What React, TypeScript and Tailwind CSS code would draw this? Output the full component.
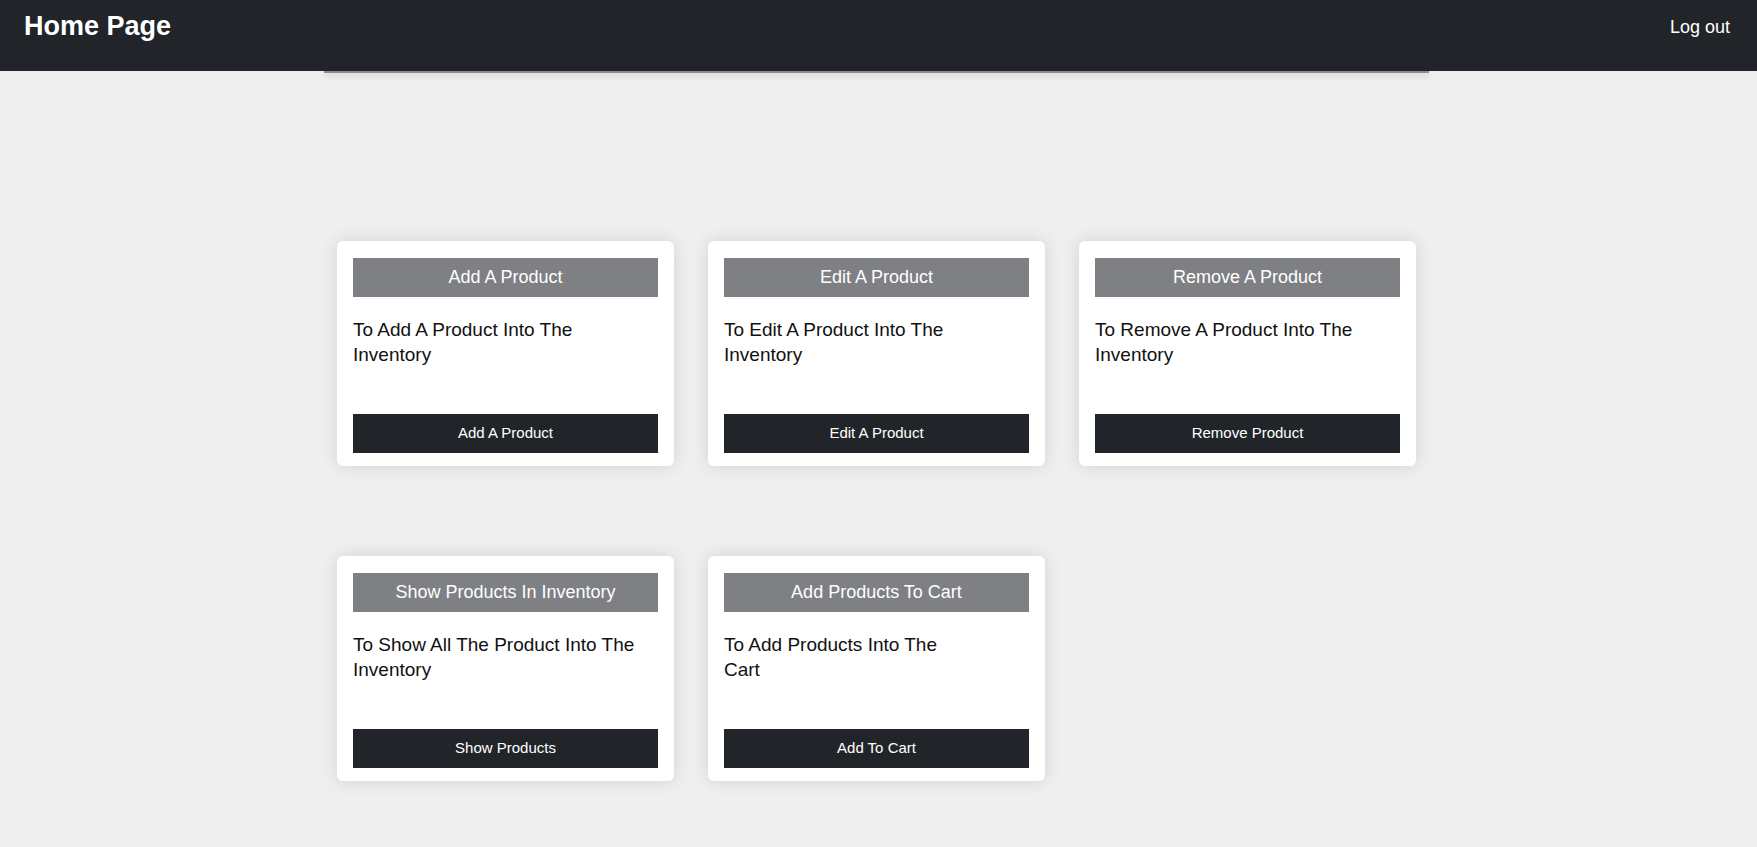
import React from "react";

const cards = [
  {
    id: 1,
    title: "Add A Product",
    lines: ["To Add A Product Into The", "Inventory"],
    button: "Add A Product",
  },
  {
    id: 2,
    title: "Edit A Product",
    lines: ["To Edit A Product Into The", "Inventory"],
    button: "Edit A Product",
  },
  {
    id: 3,
    title: "Remove A Product",
    lines: ["To Remove A Product Into The", "Inventory"],
    button: "Remove Product",
  },
  {
    id: 4,
    title: "Show Products In Inventory",
    lines: ["To Show All The Product Into The", "Inventory"],
    button: "Show Products",
  },
  {
    id: 5,
    title: "Add Products To Cart",
    lines: ["To Add Products Into The", "Cart"],
    button: "Add To Cart",
  },
];

const App: React.FC = () => {
  return (
    <div
      className="min-h-[847px] bg-[#efefef]"
      style={{ fontFamily: '"Liberation Sans", Arial, sans-serif' }}
    >
      {/* Navbar */}
      <nav className="h-[71px] bg-[#212529] text-white">
        <div className="h-[52px] flex items-center justify-between pl-6 pr-[27px]">
          <h1 className="text-[27px] font-bold leading-normal">Home Page</h1>
          <a href="#" className="text-[18px] leading-normal mt-[2px]">
            Log out
          </a>
        </div>
      </nav>

      {/* Container */}
      <div className="w-[1109px] mx-auto">
        <div className="w-[1105px]">
          <div className="h-[2px] bg-[#8c8c8c] shadow-[0_2px_6px_rgba(0,0,0,0.22)]"></div>

          <div className="grid grid-cols-3 gap-x-[34px] gap-y-[90px] px-[13px] pt-[168px]">
            {cards.map((card) => (
              <div
                key={card.id}
                className="bg-white rounded-[6px] shadow-[0_0_18px_rgba(0,0,0,0.12)] h-[225px] pt-[17px] px-4 pb-[13px] flex flex-col"
              >
                <div className="h-[39px] bg-[#7e8084] text-white text-[18px] flex items-center justify-center">
                  {card.title}
                </div>
                <p className="mt-[20px] text-[19px] leading-[25px] text-[#111]">
                  {card.lines[0]}
                  <br />
                  {card.lines[1]}
                </p>
                <button className="mt-auto h-[39px] bg-[#212529] text-white text-[15px] flex items-center justify-center">
                  {card.button}
                </button>
              </div>
            ))}
          </div>
        </div>
      </div>
    </div>
  );
};

export default App;
